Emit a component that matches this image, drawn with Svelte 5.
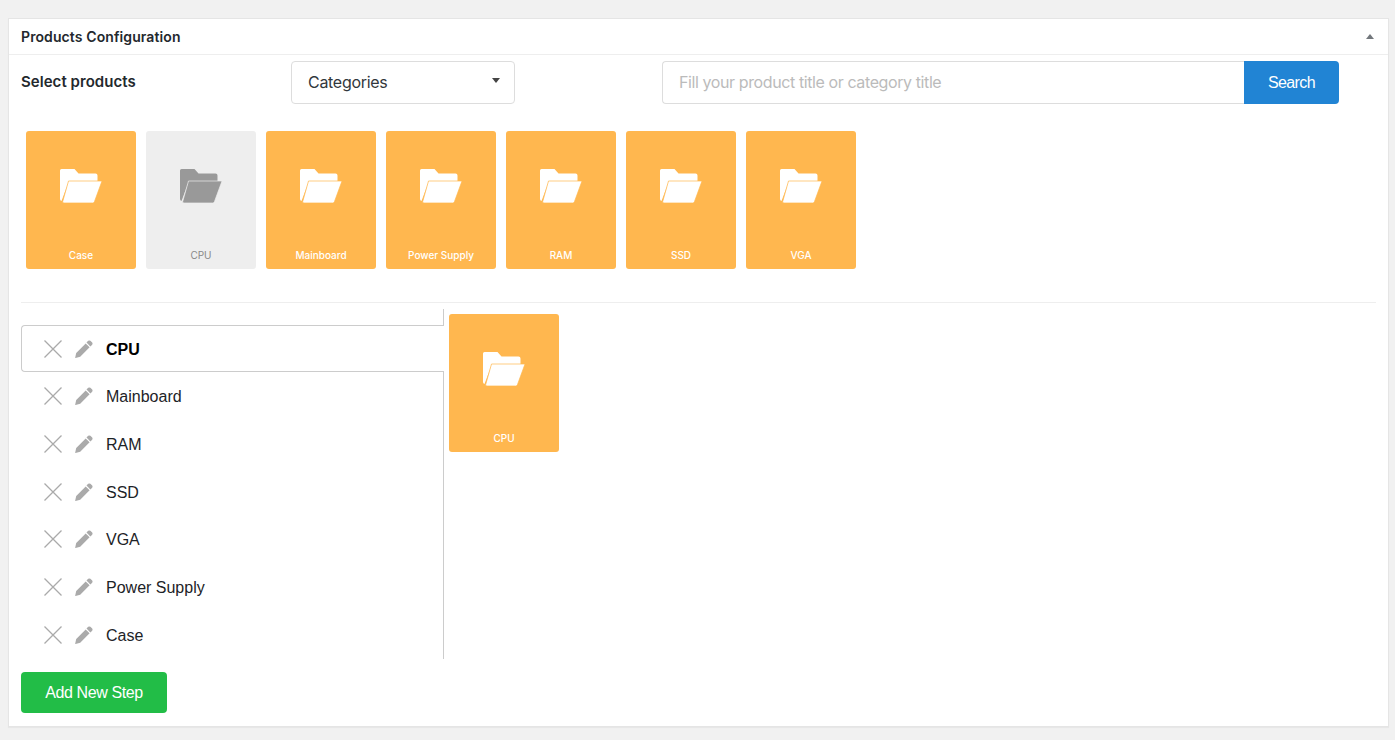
<script>
  const tiles = [
    { name: 'Case' },
    { name: 'CPU', used: true },
    { name: 'Mainboard' },
    { name: 'Power Supply' },
    { name: 'RAM' },
    { name: 'SSD' },
    { name: 'VGA' }
  ];
  const steps = ['CPU', 'Mainboard', 'RAM', 'SSD', 'VGA', 'Power Supply', 'Case'];
  let active = 0;
</script>

{#snippet folder()}
  <svg class="folder" viewBox="0 0 42 35" aria-hidden="true">
    <path class="back" d="M1.500 0H14.500L18.500 4.500H35.500Q37.500 4.500 37.500 6.500V12H9L1.500 32Q0 31.500 0 30V1.500Q0 0 1.500 0Z" />
    <path class="front" d="M8.500 12H42L34.500 32.500Q34 34 32.500 34H4Q2.300 34 2.700 32.500Z" />
  </svg>
{/snippet}

<div class="panel">
  <header class="head">
    <h2>Products Configuration</h2>
    <span class="toggle" aria-hidden="true"></span>
  </header>

  <div class="body">
    <div class="filters">
      <strong class="label">Select products</strong>
      <div class="select"><span>Categories</span><span class="caret"></span></div>
      <div class="search">
        <input type="text" placeholder="Fill your product title or category title" />
        <button type="button">Search</button>
      </div>
    </div>

    <div class="tiles">
      {#each tiles as t}
        <div class="tile" class:used={t.used}>
          {@render folder()}
          <span>{t.name}</span>
        </div>
      {/each}
    </div>

    <div class="builder">
      <ul class="steps">
        {#each steps as s, i}
          <li class:active={i === active}>
            <svg class="x" viewBox="0 0 18 18" aria-hidden="true">
              <path d="M.5.5 17.500 17.500M17.500.5.5 17.500" />
            </svg>
            <svg class="pen" viewBox="0 0 18 18" aria-hidden="true">
              <path d="M13.200.8Q14.300 0 15.400.8L17.200 2.600Q18 3.600 17.200 4.700L15.400 6.500 11.500 2.600ZM10.700 3.400 14.600 7.300 5.200 16.800.5 17.900Q.1 18 .2 17.600L1.200 12.900Z" />
            </svg>
            <span class="name">{s}</span>
          </li>
        {/each}
      </ul>
      <div class="picked">
        <div class="tile">
          {@render folder()}
          <span>CPU</span>
        </div>
      </div>
    </div>

    <button class="add" type="button">Add New Step</button>
  </div>
</div>

<style>
  :global(body) {
    background: #f1f1f1;
    font-family: "Liberation Sans", Arial, sans-serif;
  }
  .panel {
    margin: 18px 6px 13px 8px;
    height: 709px;
    box-sizing: border-box;
    background: #fff;
    border: 1px solid #e5e5e5;
    box-shadow: 0 1px 1px rgba(0,0,0,0.04);
  }
  .head {
    height: 36px;
    box-sizing: border-box;
    border-bottom: 1px solid #eee;
    padding: 0 14px 0 12px;
    display: flex;
    align-items: center;
    justify-content: space-between;
  }
  h2 {
    margin: 0;
    font: 600 14px "Inter", sans-serif;
    letter-spacing: 0.1px;
    color: #23282d;
  }
  .toggle {
    width: 0;
    height: 0;
    border-left: 4px solid transparent;
    border-right: 4px solid transparent;
    border-bottom: 5px solid #72777c;
  }
  .body { padding: 6px 12px 0; }
  .filters {
    display: flex;
    align-items: center;
    height: 43px;
  }
  .label {
    width: 270px;
    font: 600 15px "Inter", sans-serif;
    letter-spacing: 0.05px;
    color: #23282d;
    margin-top: -2px;
  }
  .select {
    width: 224px;
    height: 43px;
    box-sizing: border-box;
    border: 1px solid #ddd;
    border-radius: 4px;
    padding: 0 14px 2px 16px;
    display: flex;
    align-items: center;
    justify-content: space-between;
    font: 400 16px "Inter", sans-serif;
    letter-spacing: -0.3px;
    color: #32373c;
  }
  .caret {
    width: 0;
    height: 0;
    border-left: 4.5px solid transparent;
    border-right: 4.5px solid transparent;
    border-top: 5px solid #444;
    margin-top: -3px;
  }
  .search {
    display: flex;
    margin-left: 147px;
    width: 677px;
    height: 43px;
  }
  .search input {
    flex: 1;
    min-width: 0;
    box-sizing: border-box;
    border: 1px solid #ddd;
    border-right: 0;
    border-radius: 4px 0 0 4px;
    padding: 0 16px 2px;
    font: 400 16px "Inter", sans-serif;
    letter-spacing: -0.4px;
    outline: none;
  }
  .search input::placeholder { color: #bbb; opacity: 1; }
  .search button {
    width: 95px;
    border: 0;
    border-radius: 0 4px 4px 0;
    background: #2184d4;
    color: #fff;
    font: 400 16px "Liberation Sans", sans-serif;
    letter-spacing: -0.6px;
  }
  .tiles {
    display: flex;
    gap: 10px;
    padding: 27px 5px 33px;
    border-bottom: 1px solid #eee;
  }
  .tile {
    width: 110px;
    height: 138px;
    box-sizing: border-box;
    border-radius: 3px;
    background: #ffb74f;
    color: #fff;
    --gap: #ffb74f;
    --ink: #fff;
    display: flex;
    flex-direction: column;
    align-items: center;
    padding-top: 38px;
    flex: none;
  }
  .tile span {
    margin-top: auto;
    margin-bottom: 8px;
    font: 500 10px "Inter", sans-serif;
  }
  .tile.used {
    background: #eee;
    color: #888;
    --gap: #eee;
    --ink: #999;
  }
  .tile.used span { font-weight: 400; }
  .folder { width: 42px; height: 35px; }
  .back { fill: var(--ink); }
  .front { fill: var(--ink); stroke: var(--gap); stroke-width: 0.7; }
  .builder {
    display: flex;
    margin-top: 6px;
  }
  .steps {
    list-style: none;
    margin: 0;
    padding: 16px 0 0;
    width: 423px;
    height: 350px;
    box-sizing: border-box;
    border-right: 1px solid #ccc;
    flex: none;
  }
  .steps li {
    height: 47.67px;
    box-sizing: border-box;
    display: flex;
    align-items: center;
    padding-left: 23px;
    font-size: 16px;
    color: #1d2327;
  }
  .steps li.active {
    margin-right: -1px;
    height: 47px;
    margin-bottom: 0.67px;
    background: #fff;
    border: 1px solid #ccc;
    border-right: 0;
    border-radius: 4px 0 0 4px;
    padding-left: 22px;
    font-weight: 700;
    color: #000;
    position: relative;
  }
  .name { padding-top: 2px; }
  .x { width: 18px; height: 18px; fill: none; stroke: #aaa; stroke-width: 1.300; flex: none; }
  .pen { width: 18px; height: 18px; fill: #aaa; margin-left: 13px; margin-right: 13px; flex: none; }
  .picked { padding: 5px 0 0 5px; }
  .add {
    display: block;
    margin-top: 13px;
    width: 146px;
    height: 41px;
    border: 0;
    border-radius: 4px;
    background: #22bd47;
    color: #fff;
    font: 400 16px "Liberation Sans", sans-serif;
    letter-spacing: -0.4px;
  }
</style>
